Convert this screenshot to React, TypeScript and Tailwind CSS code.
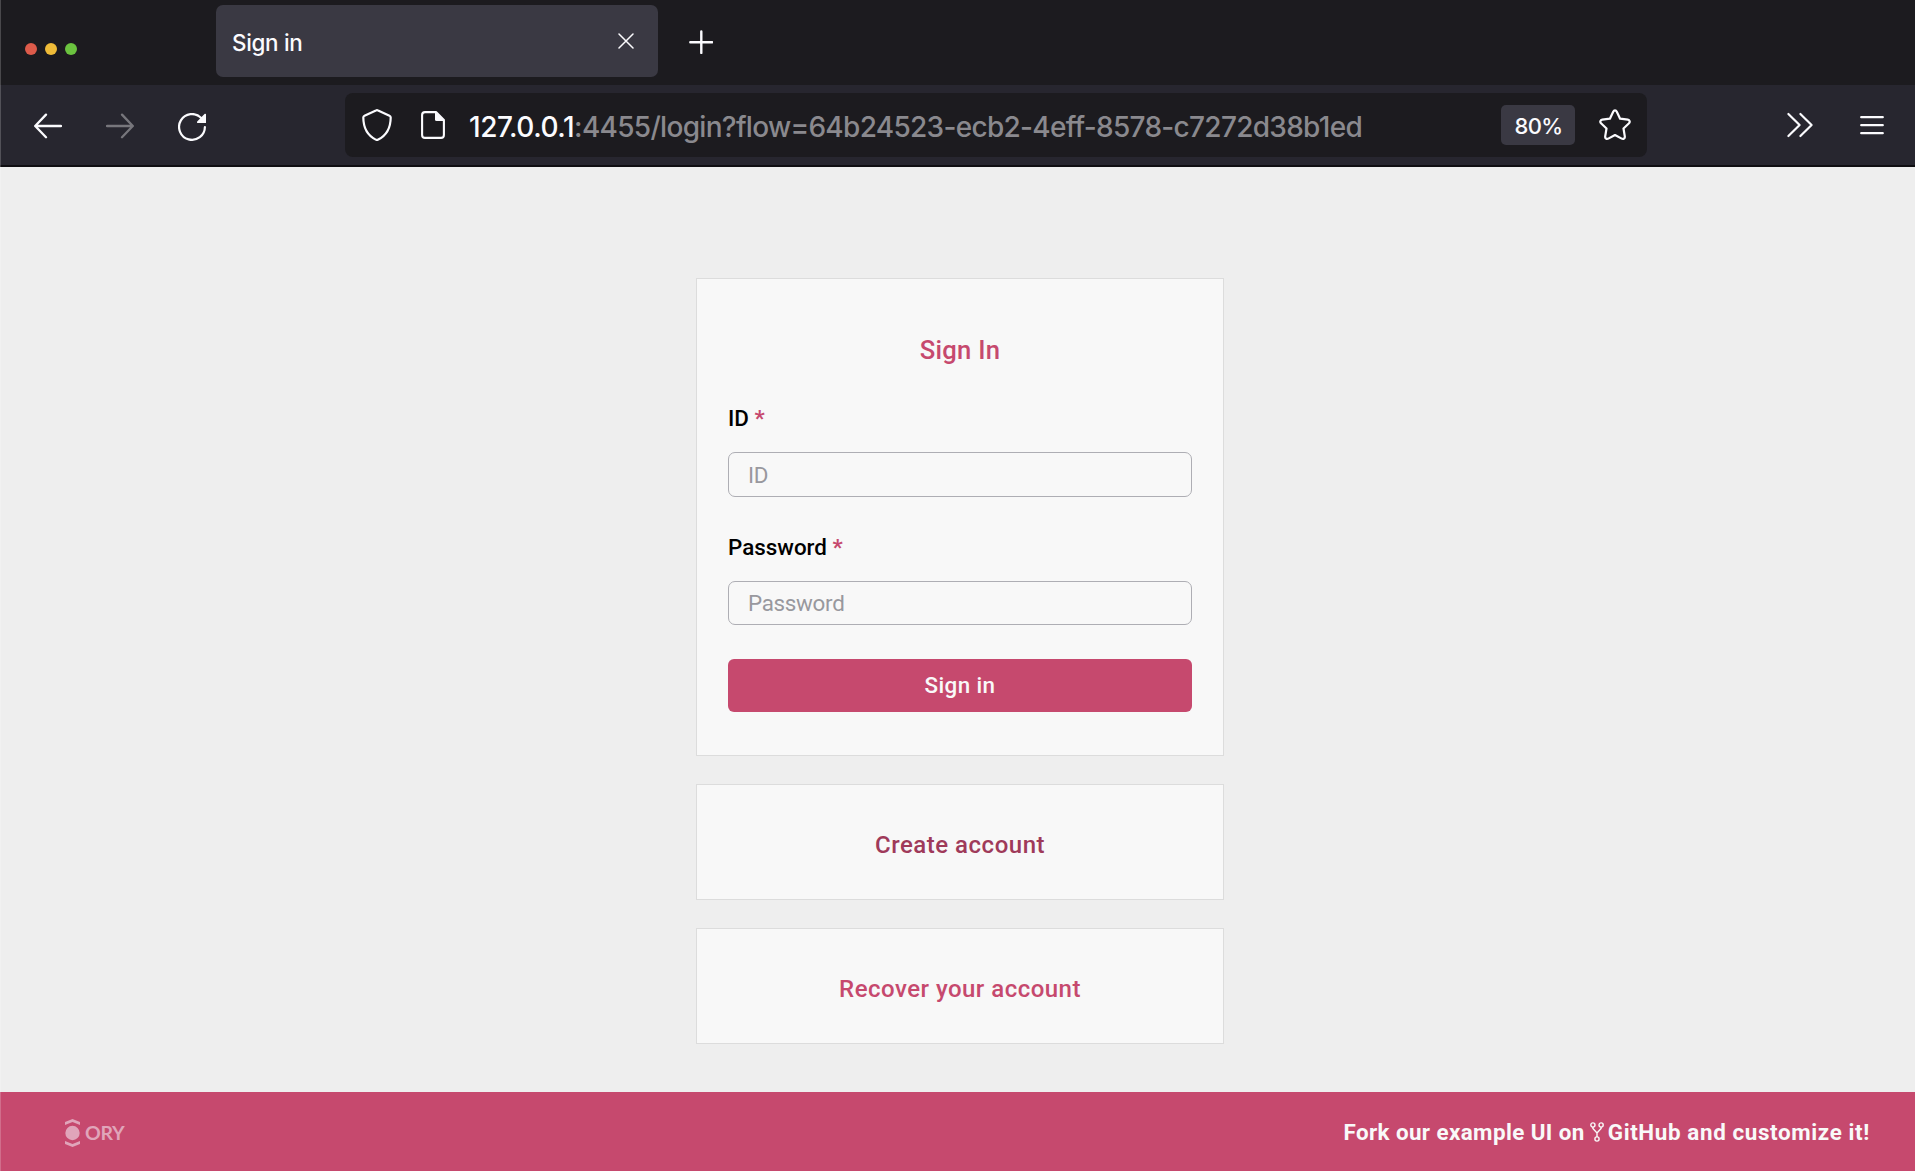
import type { ReactNode } from "react";

function BrowserTabs() {
  return (
    <div className="flex h-[85px] items-start bg-[#1c1b1f]">
      <div className="flex w-[216px] gap-2 pl-[25px] pt-[43px]">
        <span className="size-3 rounded-full bg-[#dd5b4a]" />
        <span className="size-3 rounded-full bg-[#efbb38]" />
        <span className="size-3 rounded-full bg-[#6bc33f]" />
      </div>
      <div className="mt-[5px] flex h-[72px] w-[442px] items-center justify-between rounded-[7px] bg-[#3a3943] pl-4 pr-6">
        <span className="pt-1 text-[22.4px] font-[450] leading-8 tracking-[-0.3px] text-[#fbfbfe]">Sign in</span>
        <svg className="size-4" viewBox="0 0 16 16" fill="none" stroke="#fbfbfe" strokeWidth="1.5" strokeLinecap="round">
          <path d="M1 1l14 14M15 1L1 15" />
        </svg>
      </div>
      <svg className="ml-[31px] mt-[30px] size-6" viewBox="0 0 24 24" fill="none" stroke="#fbfbfe" strokeWidth="2.4" strokeLinecap="round">
        <path d="M12.3 1.5v21.5M1.3 12.3h22" />
      </svg>
    </div>
  );
}

function Toolbar() {
  return (
    <div className="flex h-[82px] items-center border-b-2 border-[#0f0e12] bg-[#27262f]">
      <div className="flex w-[345px] items-center gap-[44px] pl-[34px]">
        <svg className="mt-0.5 size-7" viewBox="0 0 28 28" fill="none" stroke="#fbfbfe" strokeWidth="2.3" strokeLinecap="round" strokeLinejoin="round">
          <path d="M27 14H1.5M12 2.6L1.2 14 12 25.2" />
        </svg>
        <svg className="mt-0.5 size-7" viewBox="0 0 28 28" fill="none" stroke="#77767c" strokeWidth="2.3" strokeLinecap="round" strokeLinejoin="round">
          <path d="M1 14h25.500M16 2.600L26.800 14 16 25.200" />
        </svg>
        <svg className="mt-1 size-7" viewBox="0 0 28 28" fill="none">
          <path d="M26.900 14A12.900 12.900 0 1 1 23.200 4.900" stroke="#fbfbfe" strokeWidth="2.200" strokeLinecap="round" />
          <path d="M28 1.200V10h-8.200a.9.900 0 0 1-.6-1.500L26.500 1c.6-.6 1.500-.4 1.500.2z" fill="#fbfbfe" />
        </svg>
      </div>
      <div className="flex h-16 w-[1302px] items-center rounded-[8px] bg-[#1c1b1f] pl-[17px] pr-4">
        <svg className="h-8 w-[30px]" viewBox="0 0 30 32" fill="none" stroke="#fbfbfe" strokeWidth="2.200" strokeLinejoin="round">
          <path d="M13.900 1.500a2.400 2.400 0 0 1 2.200 0l11.400 5.300c.8.400 1.200 1 1.200 1.800C28.600 19 24.500 26.500 16.300 30.600a2.800 2.800 0 0 1-2.600 0C5.500 26.500 1.400 19 1.300 8.600c0-.8.400-1.400 1.200-1.800z" />
        </svg>
        <svg className="ml-[29px] h-7 w-6" viewBox="0 0 24 28" fill="none">
          <path d="M15 1.100H4A2.900 2.900 0 0 0 1.100 4v20A2.900 2.900 0 0 0 4 26.900h16a2.900 2.900 0 0 0 2.900-2.900V9z" stroke="#fbfbfe" strokeWidth="2.100" strokeLinejoin="round" />
          <path d="M14 .8v7.700a1.500 1.500 0 0 0 1.500 1.500h8z" fill="#fbfbfe" />
        </svg>
        <div className="ml-6 flex-1 whitespace-nowrap pt-[3px] text-[28px] font-[450] leading-9 text-[#8a898e]">
          <span className="tracking-[-0.45px] text-[#fbfbfe]">127.0.0.1</span>
          <span className="tracking-[-0.7px]">:4455/login?flow=64b24523-ecb2-4eff-8578-c7272d38b1ed</span>
        </div>
        <div className="flex h-10 w-[74px] items-center justify-center rounded-[5px] bg-[#3a3943] pl-px pt-[3px] text-[22px] font-medium tracking-[-0.6px] text-[#fbfbfe]">80%</div>
        <svg className="ml-6 size-8" viewBox="0 0 32 32" fill="none" stroke="#fbfbfe" strokeWidth="2.200" strokeLinejoin="round">
          <path d="M14.200 2.700c.8-1.700 2.800-1.700 3.600 0l3.300 7 7.700 1c1.900.3 2.500 2.300 1.200 3.500l-5.500 5.300 1.300 7.900c.3 1.900-1.500 3.100-3.100 2.200L16 26l-6.700 3.600c-1.600.9-3.400-.3-3.100-2.200l1.300-7.900L2 14.200c-1.300-1.200-.7-3.200 1.200-3.500l7.700-1z" />
        </svg>
      </div>
      <svg className="ml-[139px] h-[26px] w-7" viewBox="0 0 28 26" fill="none" stroke="#fbfbfe" strokeWidth="2.200" strokeLinecap="round" strokeLinejoin="round">
        <path d="M2.400 2l11.200 11L2.400 24M14.400 2l11.200 11L14.400 24" />
      </svg>
      <svg className="ml-[46px] h-5 w-6" viewBox="0 0 24 20" fill="none" stroke="#fbfbfe" strokeWidth="2.200" strokeLinecap="round">
        <path d="M1.200 2.200h21.600M1.200 10.200h21.600M1.200 18.200h21.600" />
      </svg>
    </div>
  );
}

function Card({ className, children }: { className: string; children: ReactNode }) {
  return <section className={`w-[528px] border border-[#dcdcdc] bg-[#f8f8f8] ${className}`}>{children}</section>;
}

function Field({ label, type, inputClass }: { label: string; type: string; inputClass: string }) {
  return (
    <label className="block">
      <span className="block text-[22.4px] font-medium leading-7 text-black">
        {label} <span className="font-bold text-[#c6496e]">*</span>
      </span>
      <input
        type={type}
        placeholder={label}
        className={`mt-5 block w-full rounded-[7px] border border-[#aeaeb4] bg-transparent px-[19px] text-[22.4px] tracking-[-0.3px] outline-none placeholder:text-[#98989e] ${inputClass}`}
      />
    </label>
  );
}

function OryLogo() {
  return (
    <div className="flex items-center gap-[5px] text-[#e0a5ba]">
      <svg className="h-7 w-[15px]" viewBox="0 0 15 28" fill="currentColor">
        <path d="M0 3.100L7.500 0 15 3.100v3L7.500 3 0 6.100zM0 24.900L7.500 28l7.500-3.100v-3L7.500 25 0 21.900z" />
        <circle cx="7.500" cy="14" r="7.200" />
      </svg>
      <span className="font-[Lato] text-[19.5px] font-bold leading-6 tracking-[-0.3px]">ORY</span>
    </div>
  );
}

function ForkIcon() {
  return (
    <svg className="ml-[5px] mr-1 h-5 w-[14px]" viewBox="0 0 14 20" fill="none" stroke="#f9f9f9" strokeWidth="1.400">
      <circle cx="2.900" cy="3" r="2.100" />
      <circle cx="11.100" cy="3" r="2.100" />
      <circle cx="7" cy="17" r="2.100" />
      <path d="M2.900 5.100v1.300L7 11l4.100-4.600V5.100M7 11v3.900" />
    </svg>
  );
}

export default function App() {
  return (
    <div className="relative flex h-[1171px] w-[1915px] flex-col overflow-hidden bg-[#eeeeee] font-[Roboto,sans-serif]">
      <header className="font-[Inter,sans-serif]">
        <BrowserTabs />
        <Toolbar />
      </header>
      <main className="flex flex-1 flex-col items-center gap-7 pl-[5px] pt-[111px]">
        <Card className="h-[478px] px-[31px] pt-[55px]">
          <h1 className="text-center text-[25.6px] font-medium leading-8 tracking-[0.3px] text-[#c6496e]">Sign In</h1>
          <div className="mt-[38px] flex flex-col gap-9">
            <Field label="ID" type="text" inputClass="h-[45px]" />
            <Field label="Password" type="password" inputClass="h-11" />
          </div>
          <button className="mt-[34px] h-[53px] w-full rounded-[6px] bg-[#c6496e] text-[22.4px] font-medium tracking-[0.38px] text-[#f9f9f9]">
            Sign in
          </button>
        </Card>
        <Card className="flex h-[116px] items-center justify-center pt-[5px]">
          <a className="text-[24px] font-medium tracking-[0.52px] text-[#9f3a5a]">Create account</a>
        </Card>
        <Card className="flex h-[116px] items-center justify-center pt-[5px]">
          <a className="text-[24px] font-medium tracking-[0.48px] text-[#c6496e]">Recover your account</a>
        </Card>
      </main>
      <footer className="flex h-[79px] items-center justify-between bg-[#c6496e] pl-[65px] pr-[45px] pt-0.5">
        <OryLogo />
        <a className="flex items-center text-[22.4px] font-bold text-[#f9f9f9]">
          <span className="tracking-[0.4px]">Fork our example UI on</span>
          <ForkIcon />
          <span className="tracking-[0.62px]">GitHub and customize it!</span>
        </a>
      </footer>
      <div className="absolute inset-y-0 left-0 w-px bg-white/20" />
    </div>
  );
}
